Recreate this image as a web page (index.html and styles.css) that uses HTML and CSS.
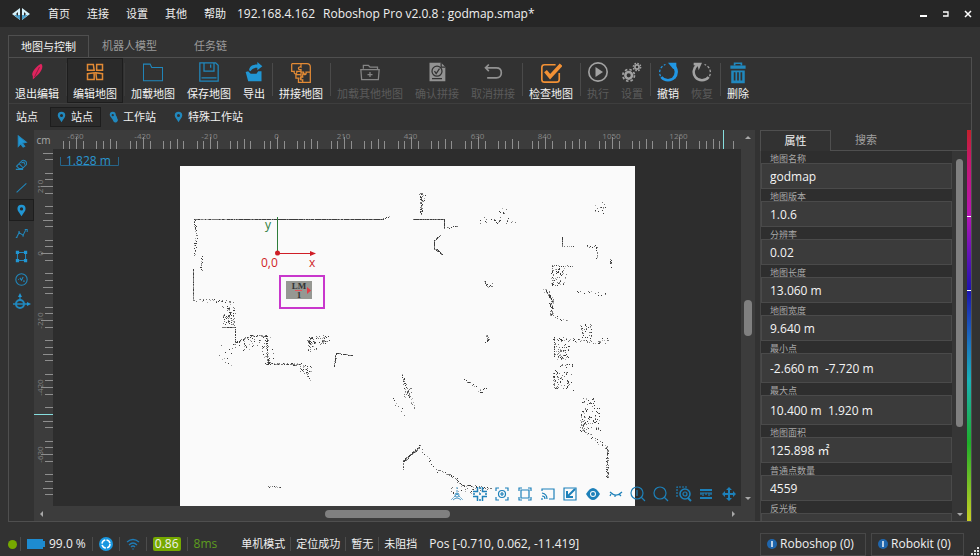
FILE: index.html
```html
<!DOCTYPE html>
<html lang="zh-CN">
<head>
<meta charset="utf-8">
<title>Roboshop Pro</title>
<link rel="stylesheet" href="styles.css">
</head>
<body>
<svg class="defs" aria-hidden="true">
  <symbol id="pin" viewBox="0 0 12 16"><path fill="currentColor" fill-rule="evenodd" d="M6 1a5 5 0 0 1 5 5c0 3-3 5-5 9-2-4-5-6-5-9a5 5 0 0 1 5-5zm0 3a2 2 0 1 0 0 4 2 2 0 0 0 0-4z"/></symbol>
  <symbol id="info" viewBox="0 0 10 10"><circle cx="5" cy="5" r="5" fill="#1f66ad"/><path d="M5 2v6" stroke="#fff" stroke-width="1.4"/></symbol>
</svg>

<header class="titlebar">
  <svg class="logo" viewBox="0 0 18 12"><path fill="#d5f1fa" d="M8 0v12L0 6zM10 0v12l8-6z"/><path fill="#4b9fca" d="M8 7v5L2 7zM10 7v5l6-5z"/><path fill="#262626" d="M6 4v4L4 6zM12 4v4l2-2z"/></svg>
  <nav class="menu">
    <button>首页</button><button>连接</button><button>设置</button><button>其他</button><button>帮助</button>
  </nav>
  <span class="ip">192.168.4.162</span>
  <span class="title">Roboshop Pro v2.0.8 : godmap.smap*</span>
  <div class="window-buttons">
    <button aria-label="最小化"><svg viewBox="0 0 8 8"><path d="M0 6h7" stroke="#fff" stroke-width="2"/></svg></button>
    <button aria-label="最大化"><svg viewBox="0 0 8 8"><path d="M1 2h5v4H1" fill="none" stroke="#fff" stroke-width="1.3"/></svg></button>
    <button aria-label="关闭"><svg viewBox="0 0 8 8"><path d="M1 1l6 6M7 1L1 7" stroke="#fff" stroke-width="1.5"/></svg></button>
  </div>
</header>

<nav class="tabs">
  <button class="tab active">地图与控制</button><button class="tab">机器人模型</button><button class="tab">任务链</button>
</nav>

<main class="pane">
  <div class="toolbar">
    <button class="tool"><svg viewBox="0 0 24 24"><path fill="#e0245e" d="M17 2c4 3-1 12-6 15l-4 4 0-4C4 13 11 5 17 2z"/><path d="M15 6L9 18" stroke="#7d1b3b"/></svg>退出编辑</button>
    <i class="sep faint"></i>
    <button class="tool selected"><svg viewBox="0 0 24 24" fill="none" stroke="#e28a35" stroke-width="1.8"><path d="M3 3h7l1 7-8 0zM14 3h7v7h-7zM3 14l8-1v8H3zM13 13l8 1v7h-7z"/></svg>编辑地图</button>
    <i class="sep faint"></i>
    <button class="tool"><svg viewBox="0 0 24 24" fill="none" stroke="#2188bd" stroke-width="1.3"><path d="M.5 2.500h8l2 4h13v16h-23z"/></svg>加载地图</button>
    <button class="tool"><svg viewBox="0 0 24 24" fill="none" stroke="#2188bd" stroke-width="1.5"><path d="M1 1h19l3 3v19H1zM6 1v10h12V1M14 3v4M3 19h18"/></svg>保存地图</button>
    <button class="tool"><svg viewBox="0 0 24 24" fill="#2196d3"><path d="M2 12l3-1 3 3h7l2-3h4v12H5z"/><path d="M6 10c1-6 6-7 10-7V0l6 5-6 5V7c-4 0-7 1-8 4z"/></svg>导出</button>
    <i class="sep"></i>
    <button class="tool"><svg class="big" viewBox="0 0 26 26" fill="none" stroke="#e28a35" stroke-width="1.5"><path d="M2 2h18q4 0 4 4v6h-5c1 4-3 4-3 0h-3V9c-4 1-4-4 0-3V2M2 2v9h3c-1 4 4 4 3 0h5M24 12v12h-9v-3c-4 1-4-4 0-3v-4h4M13 12v8M15 24h-5v-5H7v-4h6"/></svg>拼接地图</button>
    <i class="sep"></i>
    <button class="tool" disabled><svg viewBox="0 0 24 24" fill="none" stroke="#858585" stroke-width="1.5"><path d="M4 8V4h6l2 2h9v3M1 9h22l-1 12H2zM12 12v6M9 15h6"/></svg>加载其他地图</button>
    <button class="tool" disabled><svg viewBox="0 0 24 24"><path fill="#929292" d="M3 1h14l5 5v17H3z"/><g fill="none" stroke="#323232" stroke-width="1.500"><circle cx="12" cy="11" r="6"/><path d="M9 11l2 3 4-6M6 20h12M17 1v5h5"/></g></svg>确认拼接</button>
    <button class="tool" disabled><svg viewBox="0 0 24 24" fill="none" stroke="#929292" stroke-width="2"><path d="M7 3L3 7l4 4M3 7h13q6 0 6 6t-6 6H5"/></svg>取消拼接</button>
    <i class="sep"></i>
    <button class="tool"><svg class="big" viewBox="0 0 24 24" fill="none" stroke="#f39135"><path stroke-width="1.800" d="M17 3H5q-3 0-3 3v13q0 3 3 3h13q3 0 3-3v-7"/><path stroke-width="4" d="M6 10l5 6L23 3"/></svg>检查地图</button>
    <i class="sep"></i>
    <button class="tool" disabled><svg viewBox="0 0 24 24"><circle cx="12" cy="12" r="11" fill="none" stroke="#a2a2a2" stroke-width="2"/><path fill="#a2a2a2" d="M9 6l9 6-9 6z"/></svg>执行</button>
    <button class="tool" disabled><svg viewBox="0 0 24 24" fill="none" stroke="#a2a2a2"><circle cx="8" cy="16" r="4" stroke-width="3"/><circle cx="8" cy="16" r="7" stroke-width="2" stroke-dasharray="3 2.500"/><circle cx="18" cy="6" r="2.500" stroke-width="2"/><circle cx="18" cy="6" r="4.500" stroke-width="1.500" stroke-dasharray="2 1.500"/></svg>设置</button>
    <i class="sep"></i>
    <button class="tool"><svg viewBox="0 0 24 24"><g fill="none" stroke="#2196e3"><path stroke-width="4" d="M18 4a10 10 0 0 1 1 15"/><path stroke-width="3" d="M20 18a10 10 0 0 1-16 0"/><path stroke-width="1.500" stroke-dasharray="3 2" d="M3 17A10 10 0 0 1 9 3"/></g><path fill="#2196e3" d="M12 1h10v8l-4-1z"/></svg>撤销</button>
    <button class="tool" disabled><svg viewBox="0 0 24 24"><g fill="none" stroke="#a2a2a2"><path stroke-width="3" d="M6 4a10 10 0 0 0-2 14a10 10 0 0 0 16 0"/><path stroke-width="1.500" stroke-dasharray="3 2" d="M21 17A10 10 0 0 0 15 3"/></g><path fill="#a2a2a2" d="M12 1H2v3l5 1 1 5z"/></svg>恢复</button>
    <i class="sep"></i>
    <button class="tool"><svg class="big" viewBox="0 0 24 26"><path fill="none" stroke="#2188bd" stroke-width="2" d="M8 4V1.500h8V4"/><path fill="#2188bd" fill-rule="evenodd" d="M3 4h18v4H3zM4 10h16v15H4zm3 2v10h2V12zm4 0v10h2V12zm4 0v10h2V12z"/></svg>删除</button>
  </div>

  <div class="station-row">
    <span class="station-label">站点</span>
    <button class="station selected"><svg><use href="#pin"/></svg>站点</button>
    <button class="station"><svg viewBox="0 0 12 16"><path fill="currentColor" fill-rule="evenodd" d="M5 1a4 4 0 0 1 4 4c0 1 2 3 2 5a3 3 0 0 1-5 4C5 10 1 8 1 5a4 4 0 0 1 4-4zm0 3a1.500 1.500 0 1 0 0 3 1.500 1.500 0 0 0 0-3z"/></svg>工作站</button>
    <button class="station"><svg><use href="#pin"/></svg>特殊工作站</button>
  </div>

  <div class="workspace">
    <div class="side-tools">
      <button aria-label="选择"><svg viewBox="0 0 16 16"><path fill="#2196d3" d="M4 1l10 8-5 1 3 4-2 1-3-4-3 3z"/></svg></button>
      <button aria-label="橡皮"><svg viewBox="0 0 16 16"><path d="M2 10l7-7q3-1 5 2v3l-5 5H5zM5 7l5 5M8 6l3-1 1 3M1 14h9" /></svg></button>
      <button aria-label="直线"><svg viewBox="0 0 16 16"><path d="M2 14L14 3"/></svg></button>
      <button aria-label="站点" class="selected"><svg><use href="#pin"/></svg></button>
      <button aria-label="折线"><svg viewBox="0 0 16 16"><path d="M2 13l3-6 5 3 3-6M1 13h2M12 3h3v3M4 6h2M9 11h2"/></svg></button>
      <button aria-label="区域"><svg viewBox="0 0 16 16"><path d="M3 3h10v10H3z" stroke-dasharray="8 2"/><path fill="#2196d3" stroke="none" d="M1 1h4v4H1zM11 1h4v4h-4zM1 11h4v4H1zM11 11h4v4h-4z"/></svg></button>
      <button aria-label="圆形"><svg viewBox="0 0 16 16"><circle cx="8" cy="8" r="7"/><path d="M4 8h1M6 6l2 3 2-4M10 10h2"/></svg></button>
      <button aria-label="机器人"><svg class="robot" viewBox="0 0 18 18"><circle cx="7" cy="11" r="4" stroke-width="2"/><path d="M0 11h16M7 7V2M5 11h4"/><path fill="#2196d3" stroke="none" d="M7 0l2 4H5zM18 11l-4-2v4z"/></svg></button>
    </div>

    <div class="map-area">
      <div class="corner">cm</div>
      <svg class="ruler-top" id="ruler-top"></svg>
      <svg class="ruler-left" id="ruler-left"></svg>
      <div class="canvas">
        <svg class="map">
          <g transform="translate(-53 -149)">
            <path fill="#fafafa" d="M180 166h455v400H180z"/>
            <g id="cloud" shape-rendering="crispEdges"></g>
            <path d="M277.500 217v36" stroke="#2e7d3a"/>
            <path d="M277 253.500h34" stroke="#cf1d26"/>
            <path fill="#cf1d26" d="M310 251l6 2.500-6 2.500z"/>
            <circle cx="277.500" cy="253" r="2.500" fill="#cf1d26"/>
            <text x="265" y="229" class="axis green">y</text>
            <text x="261" y="267" class="axis red">0,0</text>
            <text x="309" y="267" class="axis red">x</text>
            <path fill="none" stroke="#c837cc" stroke-width="2" d="M280 276h44v32h-44z"/>
            <path fill="#969893" d="M286 281h26v18h-26z"/>
            <path d="M295 290.500h7" stroke="#e4525a"/>
            <text x="299" y="289" class="mark">LM</text>
            <text x="299" y="298" class="mark">1</text>
            <path fill="#e33b46" d="M307 287l4 3.500-4 3.500z"/>
            <path d="M60.500 157v8.500h58V157" fill="none" stroke="#26658a"/>
            <text x="66" y="165" class="scale">1.828 m</text>
          </g>
        </svg>
        <div class="view-tools">
          <button aria-label="三维"><svg viewBox="0 0 16 16"><path stroke-width=".8" stroke-dasharray="2 1" d="M8 1v7M8 8l-6 6M8 8l6 6"/><circle cx="8" cy="9" r="2" stroke-width=".8"/><path stroke-width=".8" d="M4 14q4-4 8 0"/></svg></button>
          <button aria-label="居中"><svg viewBox="0 0 16 16"><path stroke-width="1.500" d="M1 5.500h4.500V1M10.500 1v4.500H15M1 10.500h4.500V15M10.500 15v-4.500H15M8 1v2M8 13v2M1 8h2M13 8h2M7 8h2"/></svg></button>
          <button aria-label="定位"><svg viewBox="0 0 16 16"><path d="M2 5V2h3M11 2h3v3M14 11v3h-3M5 14H2v-3M8 6v4M6 8h4"/><circle cx="8" cy="8" r="3.500"/></svg></button>
          <button aria-label="适应"><svg viewBox="0 0 16 16"><path d="M2 5V2h3M11 2h3v3M14 11v3h-3M5 14H2v-3M4 4h8v8H4z"/></svg></button>
          <button aria-label="投屏"><svg viewBox="0 0 16 16"><path d="M2 5V3h12v10H9M2 7q5 1 5 6M2 10q3 0 3 3M2 12v2"/></svg></button>
          <button aria-label="导入"><svg viewBox="0 0 16 16"><path d="M9 2H2v12h12V7M9 2h5v5"/><path stroke-width="2" d="M13 3L6 10M5 5v6h6"/></svg></button>
          <button aria-label="显示"><svg viewBox="0 0 16 16"><path fill="#1d80b9" stroke="none" fill-rule="evenodd" d="M1 8q7-12 14 0-7 12-14 0zm7-3a3 3 0 1 0 0 6 3 3 0 0 0 0-6zm0 1a2 2 0 1 1 0 4 2 2 0 0 1 0-4z"/></svg></button>
          <button aria-label="隐藏"><svg viewBox="0 0 16 16"><path d="M2 6q6 6 12 0M3 8l-1 2M7 9v2M11 8l2 2"/></svg></button>
          <button aria-label="放大"><svg viewBox="0 0 16 16"><circle cx="7" cy="7" r="6"/><path d="M7 4v6M11 11l4 4"/></svg></button>
          <button aria-label="缩小"><svg viewBox="0 0 16 16"><circle cx="7" cy="7" r="6"/><path d="M11 11l4 4"/></svg></button>
          <button aria-label="框选放大"><svg viewBox="0 0 16 16"><path stroke-dasharray="2 1" d="M1 11V1h11"/><circle cx="9" cy="8" r="5" stroke-width="1.600"/><circle cx="9" cy="8" r="2"/><path stroke-width="2" d="M12 12l3 3"/></svg></button>
          <button aria-label="测距"><svg viewBox="0 0 16 16"><path stroke-width="2" d="M2 4h12M2 12h12"/><path d="M3 7v2M5 7v3M8 7v2M11 7v3M13 7v2M2 7h12"/></svg></button>
          <button aria-label="移动"><svg viewBox="0 0 16 16"><path stroke-width="2" d="M8 2v12M2 8h12"/><path fill="#1d80b9" stroke="none" d="M8 1l3 3H5zM8 15l-3-3h6zM1 8l3-3v6zM15 8l-3-3v6z"/></svg></button>
        </div>
      </div>
      <div class="vscroll"><svg viewBox="0 0 6 3"><path d="M0 3l3-3 3 3z"/></svg><b></b><svg viewBox="0 0 6 3"><path d="M0 0l3 3 3-3z"/></svg></div>
      <div class="hscroll"><svg viewBox="0 0 3 6"><path d="M3 0L0 3l3 3z"/></svg><b></b><svg viewBox="0 0 3 6"><path d="M0 0l3 3-3 3z"/></svg></div>
    </div>

    <aside class="properties">
      <div class="prop-tabs"><button class="active">属性</button><button>搜索</button></div>
      <div class="prop-body">
        <form class="fields">
          <label for="f1">地图名称</label><input id="f1" value="godmap">
          <label for="f2">地图版本</label><input id="f2" value="1.0.6">
          <label for="f3">分辨率</label><input id="f3" value="0.02">
          <label for="f4">地图长度</label><input id="f4" value="13.060 m">
          <label for="f5">地图宽度</label><input id="f5" value="9.640 m">
          <label for="f6">最小点</label><input id="f6" class="tall" value="-2.660 m  -7.720 m">
          <label for="f7">最大点</label><input id="f7" class="tall" value="10.400 m  1.920 m">
          <label for="f8">地图面积</label><input id="f8" value="125.898 ㎡">
          <label for="f9">普通点数量</label><input id="f9" value="4559">
          <label for="f10">反光板</label><input id="f10" value="">
        </form>
        <div class="prop-scroll"><b></b><svg viewBox="0 0 6 3"><path d="M0 0l3 3 3-3z"/></svg></div>
      </div>
    </aside>
    <div class="hue-bar"></div>
  </div>
</main>

<footer class="status">
  <span class="dot"></span><i></i>
  <svg class="battery" viewBox="0 0 18 10"><path fill="#1d8bd1" d="M0 0h16v2h2v6h-2v2H0z"/></svg>
  <span class="percent">99.0 %</span><i></i>
  <svg class="round" viewBox="0 0 14 14"><circle cx="7" cy="7" r="7" fill="#1997e0"/><circle cx="7" cy="7" r="4" fill="none" stroke="#fff" stroke-width="1.500" stroke-dasharray="5 1.300"/></svg><i></i>
  <svg class="round" viewBox="0 0 14 14" fill="none" stroke="#1f7bb5" stroke-width="1.300"><path d="M1 5q6-5 12 0M3 8q4-4 8 0M5 10q2-2 4 0M6.500 12h1"/></svg><i></i>
  <span class="badge">0.86</span><i></i>
  <span class="delay">8ms</span>
  <span class="cn">单机模式</span><i></i><span class="cn">定位成功</span><i></i><span class="cn">暂无</span><i></i><span class="cn">未阻挡</span>
  <span class="pos">Pos [-0.710, 0.062, -11.419]</span>
  <div class="devices">
    <button class="wide"><svg><use href="#info"/></svg>Roboshop (0)</button>
    <button><svg><use href="#info"/></svg>Robokit (0)</button>
  </div>
  <svg class="grip" viewBox="0 0 9 9"><path fill="#ddd" d="M6 0h2v2H6zM3 3h2v2H3zM6 3h2v2H6zM0 6h2v2H0zM3 6h2v2H3zM6 6h2v2H6z"/></svg>
</footer>
<script src="map.js"></script>
</body>
</html>
```
FILE: styles.css
```css
* { box-sizing: border-box; }
body {
  margin: 0;
  height: 100vh;
  display: flex;
  flex-direction: column;
  overflow: hidden;
  background: #323232;
  color: #f0f0f0;
  font: 12px/16px "Open Sans", "Noto Sans CJK SC", sans-serif;
}
button, input { font: inherit; color: inherit; background: none; border: 0; padding: 0; margin: 0; }
svg { display: block; flex: none; }
.defs { position: absolute; width: 0; height: 0; }

.titlebar { display: flex; align-items: center; height: 27px; padding: 0 8px 0 12px; background: #262626; flex: none; }
.logo { width: 18px; height: 12px; margin-right: 18px; }
.menu { display: flex; gap: 17px; font-size: 11px; }
.ip { margin-left: 11px; }
.title { margin-left: 8px; }
.window-buttons { display: flex; gap: 14px; margin-left: auto; }
.window-buttons svg { width: 8px; height: 8px; }

.tabs { display: flex; padding: 0 8px; margin-top: 8px; height: 22px; flex: none; font-size: 11px; }
.tab { width: 81px; color: #9a9a9a; }
.tab.active { border: 1px solid #4f4f4f; border-bottom: 0; color: #f4f4f4; }

.pane { flex: 1; min-height: 0; display: flex; flex-direction: column; margin: 0 8px; border: 1px solid #4f4f4f; }
.toolbar { display: flex; height: 46px; flex: none; border-bottom: 1px solid #3e3e3e; font-size: 11px; }
.tool { display: flex; flex-direction: column; align-items: center; justify-content: space-between; padding: 4px 6px 1px; border: 0; white-space: nowrap; color: #f4f4f4; }
.tool:disabled { color: #5b5b5b; }
.tool svg { width: 20px; height: 20px; }
.tool svg.big { width: 22px; height: 22px; }
.selected { background: #2a2a2a; box-shadow: inset 0 0 0 1px #1d1d1d; }
.sep { width: 1px; margin: 5px 0 7px 1px; background: #4a4a4a; }
.sep.faint { background: #3a3a3a; }

.station-row { display: flex; align-items: center; height: 26px; flex: none; padding-left: 7px; font-size: 11px; }
.station-label { margin-right: 12px; }
.station { display: flex; align-items: center; gap: 5px; height: 20px; padding: 0 8px 0 7px; margin-right: 1px; }
.station svg { width: 9px; height: 12px; color: #2188bd; }
.station:last-child { margin-left: 2px; }

.workspace { flex: 1; min-height: 0; display: flex; }
.side-tools { width: 25px; display: flex; flex-direction: column; gap: 1px; flex: none; }
.side-tools button { height: 22px; display: flex; align-items: center; justify-content: center; }
.side-tools svg { width: 13px; height: 13px; fill: none; stroke: #2188bd; stroke-width: 1.3; }
.side-tools svg.robot { width: 18px; height: 18px; }
.side-tools .selected svg { color: #2196d3; stroke: none; }

.map-area { flex: 1; min-width: 0; display: grid; grid-template: 19px 1fr 15px / 19px 1fr 14px; background: #3c3c3c; }
.corner { font-size: 10px; line-height: 20px; text-align: center; color: #a8a8a8; }
.ruler-top, .ruler-left { width: 100%; height: 100%; overflow: hidden; stroke: #8e8e8e; }
.ruler-top text, .ruler-left text { font-size: 8px; fill: #858585; stroke: none; text-anchor: middle; }
.ruler-top .cursor, .ruler-left .cursor { stroke: #86dede; }
.ruler-top { grid-area: 1 / 2; }
.ruler-left { grid-area: 2 / 1; }
.canvas { grid-area: 2 / 2; position: relative; min-height: 0; background: #2d2d2d; overflow: hidden; }
.map { position: absolute; width: 100%; height: 100%; }
.axis { font-size: 12px; }
.green { fill: #2e7d3a; }
.red { fill: #cf1d26; }
.mark { font: bold 9px "Liberation Serif", serif; text-anchor: middle; fill: #333; }
.scale { font-size: 12px; fill: #2a96cf; }
.view-tools { position: absolute; right: 4px; bottom: 4px; width: 288px; display: flex; justify-content: space-between; }
.view-tools svg { width: 16px; height: 16px; fill: none; stroke: #1d80b9; stroke-width: 1.2; }

.vscroll { grid-area: 1 / 3 / 3 / 4; display: flex; flex-direction: column; align-items: center; justify-content: space-between; padding: 6px 0; }
.vscroll svg, .prop-scroll svg { width: 6px; height: 3px; fill: #a8a8a8; }
.vscroll b { width: 8px; height: 36px; border-radius: 4px; background: #808080; }
.hscroll { grid-area: 3 / 1 / 4 / 3; display: flex; align-items: center; justify-content: space-between; padding: 0 6px; }
.hscroll svg { width: 3px; height: 6px; fill: #a8a8a8; }
.hscroll b { height: 8px; width: 18%; border-radius: 4px; background: #808080; }

.properties { width: 207px; margin-left: 5px; display: flex; flex-direction: column; flex: none; }
.prop-tabs { display: flex; height: 21px; flex: none; font-size: 11px; }
.prop-tabs button { width: 70px; color: #a0a0a0; }
.prop-tabs .active { width: 71px; color: #f4f4f4; border: 1px solid #4f4f4f; border-bottom: 0; }
.prop-tabs::after { content: ""; flex: 1; }
.prop-tabs button + button, .prop-tabs::after { border-bottom: 1px solid #4f4f4f; }
.prop-body { flex: 1; min-height: 0; display: flex; overflow: hidden; border-left: 1px solid #454545; }
.fields { flex: 1; min-width: 0; display: flex; flex-direction: column; overflow: hidden; }
.fields label { position: relative; flex: none; height: 12px; line-height: 16px; padding-left: 9px; font-size: 9px; color: #a8a8a8; background: #2e2e2e; }
.fields input { flex: none; height: 26px; width: 100%; padding: 0 8px; border: 1px solid #4a4a4a; background: #3b3b3b; color: #f4f4f4; white-space: pre; }
.fields input.tall { height: 30px; }
.prop-scroll { width: 15px; display: flex; flex-direction: column; align-items: center; justify-content: space-between; padding: 8px 0 5px; background: #363636; }
.prop-scroll b { width: 7px; height: 75%; border-radius: 4px; background: #808080; }
.hue-bar {
  width: 4px;
  flex: none;
  background:
    linear-gradient(#fff, #fff) 0 22% / 100% 1px no-repeat,
    linear-gradient(#fff, #fff) 0 41% / 100% 1px no-repeat,
    linear-gradient(#c3202a, #c8186f 8%, #b516b5 22%, #6a14b8 31%, #1c14b0 41%, #1b78c0 55%, #1ab2b8 64%, #1fae2a 80%, #c9cf24);
}

.status { display: flex; align-items: center; height: 34px; flex: none; padding: 10px 0 0 8px; position: relative; }
.status i { width: 1px; height: 14px; margin: 0 6px; background: #4c4c4c; }
.dot { width: 9px; height: 9px; margin-right: -3px; border-radius: 50%; background: #76a900; }
.battery { width: 18px; height: 10px; }
.percent { margin-left: 4px; }
.round { width: 14px; height: 14px; }
.badge { background: #76a900; border-radius: 2px; line-height: 14px; padding: 0 2px; }
.delay { color: #5e9d1e; margin-right: 24px; }
.cn { font-size: 11px; }
.cn + i { margin: 0 5px; }
.pos { margin-left: 12px; }
.devices { display: flex; gap: 5px; margin-left: auto; margin-right: 16px; }
.devices button { display: flex; align-items: center; gap: 3px; width: 93px; height: 23px; padding-left: 6px; border: 1px solid #484848; white-space: nowrap; }
.devices .wide { width: 106px; }
.devices svg { width: 10px; height: 10px; }
.grip { position: absolute; right: 0; bottom: 0; width: 9px; height: 9px; }
```
FILE: map.js
```js
const NS = 'http://www.w3.org/2000/svg';

// Seeded generator keeps the point cloud stable between loads.
let seed = 7;
function rnd() {
  seed = (seed * 16807) % 2147483647;
  return seed / 2147483647;
}

function add(parent, tag, attrs, text) {
  const el = document.createElementNS(NS, tag);
  for (const key in attrs) el.setAttribute(key, attrs[key]);
  if (text !== undefined) el.textContent = text;
  parent.appendChild(el);
}

// Rulers: one tick per 21 cm, a labelled one per 210 cm.
const STEP = 6.7;
function ruler(id, vertical, zero, from, to, cursor) {
  const svg = document.getElementById(id);
  let d = '';
  for (let i = from; i <= to; i++) {
    const m = ((i % 10) + 10) % 10;
    if (m === 2 || m === 7) continue;
    const p = Math.round(zero + i * STEP) + 0.5;
    const start = m === 0 ? 7 : m === 5 ? 9 : 11;
    d += vertical ? `M${start} ${p}H19` : `M${p} ${start}V19`;
    if (m === 0) {
      const value = String((vertical ? -i : i) * 21);
      if (vertical) add(svg, 'text', { transform: `translate(9 ${p}) rotate(-90)` }, value);
      else add(svg, 'text', { x: p - 1, y: 9 }, value);
    }
  }
  add(svg, 'path', { d });
  add(svg, 'path', { class: 'cursor', d: vertical ? `M0 ${cursor}H19` : `M${cursor} 0V19` });
}
ruler('ruler-top', false, 224, -33, 68, 670.5);
ruler('ruler-left', true, 104, -15, 36, 265.5);

// Laser walls: [points, density, spread]
const walls = [
  [[194, 219, 250, 219], 1, 1], [[240, 219, 383, 219], 3, 1], [[383, 218, 389, 216], 0.6, 1],
  [[194, 219, 196, 235, 194, 256], 1.0, 2], [[193, 269, 193, 300], 1, 0], [[194, 300, 233, 301], 0.7, 3],
  [[201, 257, 201, 270], 0.8, 2], [[222, 327, 235, 327, 235, 342], 1.6, 1],
  [[233, 344, 250, 336, 266, 335], 1.2, 2], [[266, 335, 268, 363], 1.8, 2], [[266, 363, 300, 364], 1.8, 2],
  [[300, 369, 308, 369], 1, 4], [[334, 366, 336, 353, 352, 355], 1.4, 1],
  [[421, 193, 421, 214], 2.5, 2], [[413, 219, 444, 219, 444, 228], 3, 1], [[444, 228, 458, 226], 0.5, 2],
  [[440, 235, 434, 241, 434, 248, 442, 254], 2, 1],
  [[562, 237, 562, 245], 1, 1], [[562, 246, 573, 246], 0.4, 1], [[586, 246, 596, 246, 597, 258], 1, 2],
  [[552, 265, 552, 285], 1, 2], [[552, 265, 572, 266], 0.5, 1], [[545, 290, 551, 297, 552, 315], 2.5, 4], [[553, 315, 567, 321], 0.5, 2],
  [[577, 291, 606, 294], 0.4, 4], [[581, 325, 583, 338], 1, 2], [[554, 338, 600, 342], 0.8, 3], [[554, 338, 554, 356], 0.9, 1],
  [[560, 365, 573, 364], 0.9, 2], [[554, 373, 555, 386], 1.2, 3],
  [[583, 410, 582, 428], 1.3, 4], [[582, 428, 605, 447], 0.7, 3], [[607, 446, 607, 477], 2, 2],
  [[402, 375, 404, 384], 1.4, 2], [[404, 384, 414, 407], 0.9, 3], [[393, 399, 403, 413], 0.4, 4],
  [[403, 461, 420, 446], 3, 2], [[403, 461, 403, 469], 0.6, 1], [[418, 446, 438, 471], 0.4, 3],
  [[438, 470, 450, 474, 462, 485, 490, 488], 1, 2],
  [[464, 380, 476, 386], 0.6, 2], [[478, 390, 486, 388], 0.7, 2], [[480, 392, 482, 392], 2, 1],
  [[268, 486, 280, 487], 0.7, 1], [[486, 335, 488, 338, 486, 342], 1.5, 2]
];

// Loose clutter: [x, y, width, height, points]
const clutter = [
  [222, 303, 13, 22, 60], [227, 305, 6, 18, 20], [238, 338, 22, 12, 28], [218, 345, 18, 20, 14],
  [262, 336, 12, 25, 22], [307, 335, 22, 9, 55], [307, 338, 9, 14, 25], [300, 364, 12, 9, 20], [306, 370, 5, 10, 8],
  [419, 190, 6, 12, 8], [480, 217, 38, 6, 22], [498, 208, 8, 12, 10], [594, 202, 13, 12, 15],
  [552, 268, 14, 18, 45], [484, 281, 8, 6, 14], [609, 257, 3, 12, 10], [584, 324, 9, 14, 25],
  [554, 340, 15, 20, 65], [554, 370, 14, 18, 45], [565, 365, 10, 28, 12],
  [580, 398, 14, 8, 20], [580, 407, 20, 24, 70], [404, 388, 8, 10, 22], [598, 338, 12, 6, 12],
  [450, 487, 36, 6, 20]
];

const shades = { '#3c3c3c': '', '#777': '', '#aaa': '' };
const names = Object.keys(shades);
function dot(x, y) {
  shades[names[Math.floor(rnd() * 2.5)]] += `M${Math.round(x)} ${Math.round(y)}h1v1h-1z`;
}

for (const [pts, density, spread] of walls) {
  for (let i = 0; i + 3 < pts.length; i += 2) {
    const dx = pts[i + 2] - pts[i];
    const dy = pts[i + 3] - pts[i + 1];
    const n = Math.ceil(Math.hypot(dx, dy) * density);
    for (let k = 0; k <= n; k++) {
      const t = k / n;
      dot(pts[i] + dx * t + (rnd() - 0.5) * spread, pts[i + 1] + dy * t + (rnd() - 0.5) * spread);
    }
  }
}
for (const [x, y, w, h, n] of clutter) {
  for (let k = 0; k < n; k++) dot(x + rnd() * w, y + rnd() * h);
}
const cloud = document.getElementById('cloud');
for (const fill of names.reverse()) add(cloud, 'path', { fill, d: shades[fill] });
```
